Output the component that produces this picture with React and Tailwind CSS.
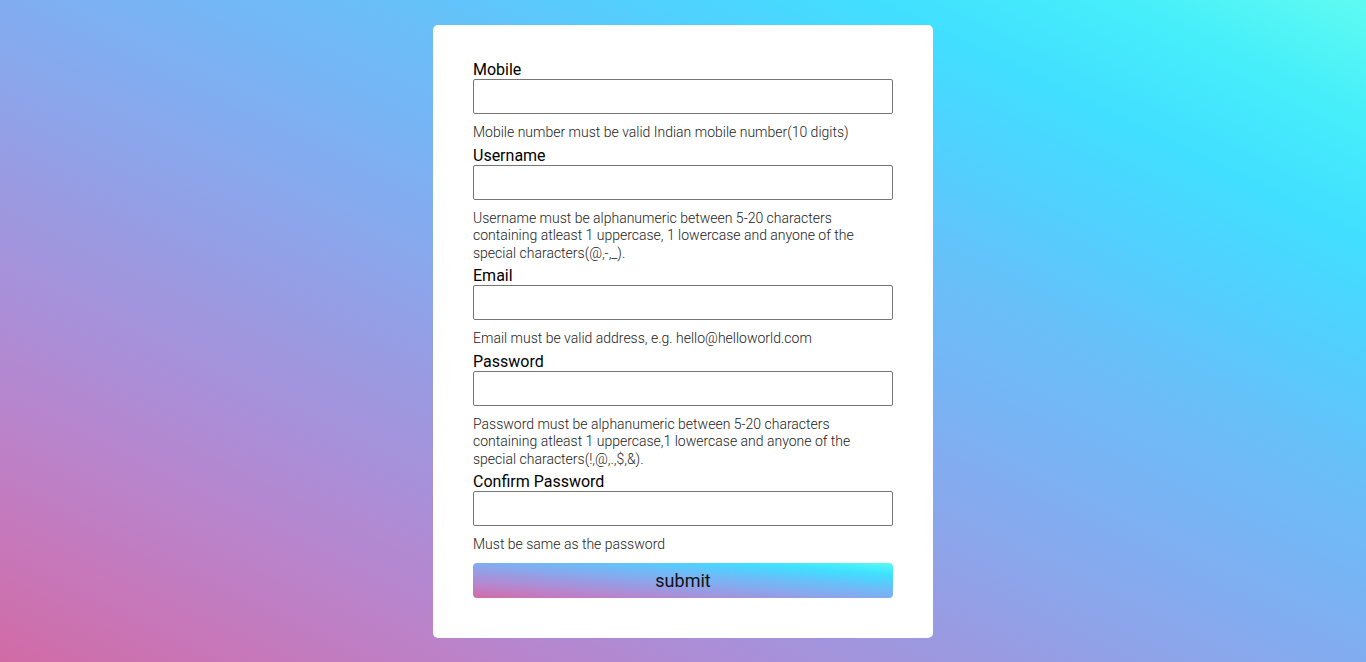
import React from "react";

const grad =
  "bg-[linear-gradient(to_top_right,#d16ba5,#c777b9,#ba83ca,#aa8fd8,#9a9ae1,#8aa7ec,#79b3f4,#69bff8,#52cffe,#41dfff,#46eefa,#5ffbf1)]";

function Field({ label, type = "text", help }) {
  return (
    <div className="flex flex-col">
      <label className="text-[16px] leading-[19px] text-black font-normal">{label}</label>
      <input
        type={type}
        className="h-[35px] w-full border border-[#767676] rounded-[2px] bg-white px-2 outline-none"
      />
      <p className="mt-[10px] mb-[4px] text-[14px] leading-[17.5px] font-light text-[#222]">{help}</p>
    </div>
  );
}

export default function App() {
  return (
    <div
      className={`min-h-[662px] w-full flex items-start justify-center pt-[25px] pb-[24px] ${grad}`}
      style={{ fontFamily: "Roboto, 'Liberation Sans', sans-serif" }}
    >
      <div className="w-[500px] bg-white rounded-[5px] px-[40px] pt-[35px] pb-[40px]">
        <form className="flex flex-col" onSubmit={(e) => e.preventDefault()}>
          <Field label="Mobile" help="Mobile number must be valid Indian mobile number(10 digits)" />
          <Field
            label="Username"
            help="Username must be alphanumeric between 5-20 characters containing atleast 1 uppercase, 1 lowercase and anyone of the special characters(@,-,_)."
          />
          <Field label="Email" help="Email must be valid address, e.g. hello@helloworld.com" />
          <Field
            label="Password"
            type="password"
            help="Password must be alphanumeric between 5-20 characters containing atleast 1 uppercase,1 lowercase and anyone of the special characters(!,@,.,$,&)."
          />
          <Field label="Confirm Password" type="password" help="Must be same as the password" />
          <button
            type="submit"
            className={`mt-[5px] h-[35px] w-full rounded-[4px] text-[18px] text-[#111] ${grad}`}
          >
            submit
          </button>
        </form>
      </div>
    </div>
  );
}
